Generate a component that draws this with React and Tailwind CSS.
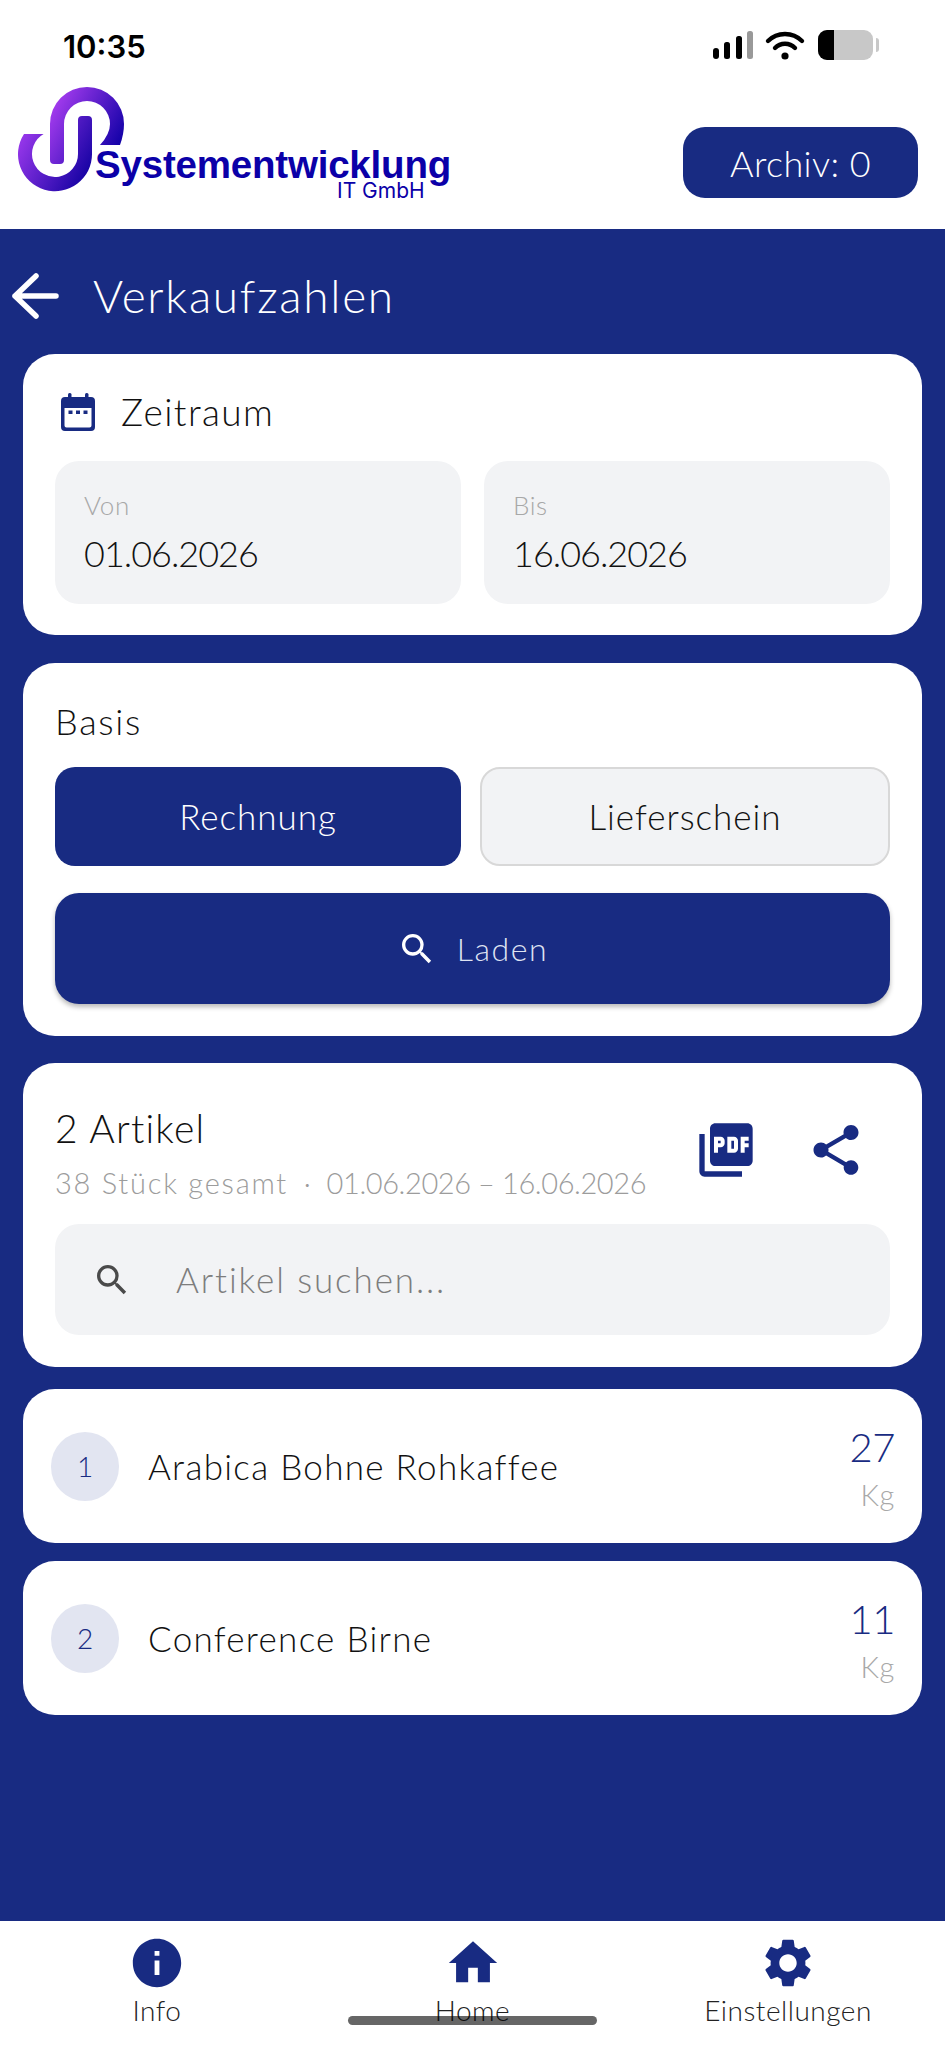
import React from "react";
import { MdSearch, MdPictureAsPdf, MdShare, MdInfo, MdHome, MdSettings } from "react-icons/md";

function Logo() {
  return (
    <div className="relative h-[118px] w-[470px] shrink-0">
      <svg className="absolute left-0 top-0" width="140" height="118" viewBox="0 80 140 118">
        <defs>
          <linearGradient id="gn" gradientUnits="userSpaceOnUse" x1="50" y1="100" x2="124" y2="140">
            <stop offset="0" stopColor="#ad3ff2" />
            <stop offset="1" stopColor="#1000a6" />
          </linearGradient>
          <linearGradient id="gu" gradientUnits="userSpaceOnUse" x1="20" y1="135" x2="92" y2="175">
            <stop offset="0" stopColor="#9a38ec" />
            <stop offset="1" stopColor="#1000a0" />
          </linearGradient>
        </defs>
        <path fill="url(#gn)" d="M50 160Q50 164 54 164H60Q64 164 64 160V124A23 23 0 1 1 110 124Q110 134 100 145H120Q124 134 124 124A37 37 0 0 0 50 124Z" />
        <path fill="url(#gu)" d="M24 134A37 37 0 1 0 92 154V120Q92 116 88 116H82Q78 116 78 120V154A23 23 0 1 1 43.6 134Z" />
      </svg>
      <span className="absolute left-[95px] top-[67px] font-['Liberation_Sans',sans-serif] text-[38.5px] leading-[36px] font-bold tracking-[-0.2px] whitespace-nowrap text-[#0b00a8]">
        Systementwicklung
      </span>
      <span className="absolute left-[337px] top-[103px] font-['Inter',sans-serif] text-[21px] leading-[16px] whitespace-nowrap text-[#0b00a8]">
        IT GmbH
      </span>
    </div>
  );
}

function StatusIcons() {
  return (
    <svg width="170" height="32" viewBox="713 31 170 32" className="shrink-0">
      <rect x="713" y="50" width="6" height="11" rx="3" fill="#000" />
      <rect x="724" y="44" width="6" height="17" rx="2.5" fill="#000" />
      <rect x="736" y="38" width="6" height="23" rx="2.5" fill="#000" />
      <rect x="747" y="33" width="6" height="28" rx="2.5" fill="#999" />
      <path d="M768 43A24 24 0 0 1 802 43" fill="none" stroke="#000" strokeWidth="4.4" strokeLinecap="round" />
      <path d="M775 50A14 14 0 0 1 795 50" fill="none" stroke="#000" strokeWidth="4.4" strokeLinecap="round" />
      <circle cx="785" cy="58" r="3.6" fill="#000" />
      <rect x="818" y="32" width="55" height="30" rx="9" fill="#c8c8c8" />
      <path d="M834 32H827A9 9 0 0 0 818 41V53A9 9 0 0 0 827 62H834Z" fill="#000" />
      <path d="M876 40Q879 40 879 43V51Q879 54 876 54Z" fill="#c8c8c8" />
    </svg>
  );
}

function CalendarIcon() {
  return (
    <svg width="34" height="38" viewBox="0 0 34 38" className="shrink-0">
      <rect x="7" y="0" width="3.5" height="6" rx="1.5" fill="#182b82" />
      <rect x="24" y="0" width="3.5" height="6" rx="1.5" fill="#182b82" />
      <path d="M4 4H30A4 4 0 0 1 34 8V34A4 4 0 0 1 30 38H4A4 4 0 0 1 0 34V8A4 4 0 0 1 4 4ZM3.5 15V32.5A2 2 0 0 0 5.5 34.5H28.5A2 2 0 0 0 30.5 32.5V15Z" fill="#182b82" fillRule="evenodd" />
      <rect x="7.5" y="17.5" width="4" height="3.5" fill="#182b82" />
      <rect x="15" y="17.5" width="4" height="3.5" fill="#182b82" />
      <rect x="22.5" y="17.5" width="4" height="3.5" fill="#182b82" />
    </svg>
  );
}

function Card({ className, children }) {
  return <div className={"rounded-[32px] bg-white " + className}>{children}</div>;
}

function DateBox({ label, value }) {
  return (
    <div className="flex h-[143px] flex-1 flex-col rounded-[24px] bg-[#f2f3f5] pl-[29px] pt-[26px]">
      <span className="text-[26px] leading-[36px] font-light tracking-[0.6px] text-[#a8a8a8]">{label}</span>
      <span className="mt-[7px] text-[36px] leading-[46px] font-light tracking-[-1px] text-[#111]">{value}</span>
    </div>
  );
}

function Row({ n, name, value, className }) {
  return (
    <Card className={"flex h-[154px] items-center pl-[28px] pr-[27px] " + className}>
      <div className="flex h-[69px] w-[68px] shrink-0 items-center justify-center rounded-full bg-[#e2e5f1] text-[28px] font-light text-[#182b82]">{n}</div>
      <span className="ml-[29px] flex-1 text-[35px] font-light tracking-[1.3px] text-[#111]">{name}</span>
      <div className="flex flex-col items-end pt-[2px]">
        <span className="text-[40px] leading-[50px] font-light tracking-[-0.5px] text-[#182b82]">{value}</span>
        <span className="mt-[5px] text-[29px] leading-[36px] font-light tracking-[0.6px] text-[#a8a8a8]">Kg</span>
      </div>
    </Card>
  );
}

function NavItem({ icon, label, className }) {
  return (
    <div className={"flex flex-col items-center " + className}>
      {icon}
      <span className="text-[28px] leading-[36px] font-light tracking-[0.5px] text-[#222]">{label}</span>
    </div>
  );
}

export default function App() {
  return (
    <div className="relative flex h-[2048px] w-[945px] flex-col overflow-hidden bg-white font-['Lato',sans-serif]">
      <header className="h-[229px] shrink-0 bg-white">
        <div className="flex h-[80px] items-start justify-between pl-[63px] pr-[62px] pt-[29px]">
          <span className="font-['Inter',sans-serif] text-[31px] leading-[36px] font-semibold text-black">10:35</span>
          <StatusIcons />
        </div>
        <div className="flex items-start justify-between pr-[27px]">
          <Logo />
          <button className="mt-[47px] h-[71px] w-[235px] rounded-[22px] bg-[#182b82] text-[36px] font-light tracking-[0.4px] text-white">Archiv: 0</button>
        </div>
      </header>

      <main className="flex flex-1 flex-col bg-[#182b82] px-[23px]">
        <div className="-ml-[23px] flex h-[125px] shrink-0 items-center pt-[8px]">
          <svg width="58" height="50" viewBox="0 0 58 50" className="ml-[8px] shrink-0">
            <path d="M48 25H7M28 5L7 25L28 45" fill="none" stroke="#fff" strokeWidth="5.5" strokeLinecap="round" strokeLinejoin="round" />
          </svg>
          <span className="ml-[27px] text-[46px] font-light tracking-[1.7px] text-white">Verkaufzahlen</span>
        </div>

        <Card className="h-[281px] shrink-0 px-[32px]">
          <div className="flex h-[107px] items-center pt-[9px]">
            <div className="ml-[6px]"><CalendarIcon /></div>
            <span className="ml-[26px] text-[37px] font-light tracking-[1.4px] text-[#111]">Zeitraum</span>
          </div>
          <div className="flex gap-[23px]">
            <DateBox label="Von" value="01.06.2026" />
            <DateBox label="Bis" value="16.06.2026" />
          </div>
        </Card>

        <Card className="mt-[28px] h-[373px] shrink-0 px-[32px]">
          <div className="flex h-[104px] items-center pt-[12px] text-[36px] font-light tracking-[1.7px] text-[#111]">Basis</div>
          <div className="flex gap-[19px]">
            <button className="h-[99px] flex-1 rounded-[20px] bg-[#182b82] text-[35px] tracking-[1px] font-light text-white">Rechnung</button>
            <button className="h-[99px] flex-1 rounded-[20px] border-2 border-[#d8d8d8] bg-[#f2f3f5] text-[35px] font-light tracking-[1px] text-[#111]">Lieferschein</button>
          </div>
          <button className="mt-[27px] flex h-[111px] w-full items-center justify-center rounded-[24px] bg-[#182b82] text-[32px] font-light tracking-[1.6px] text-[#dfe3f2] shadow-[0_3px_5px_rgba(0,0,0,0.28)]">
            <MdSearch className="mr-[20px] text-[40px] text-white" />
            Laden
          </button>
        </Card>

        <Card className="mt-[27px] h-[304px] shrink-0 px-[32px]">
          <div className="flex h-[161px] items-start justify-between">
            <div className="flex flex-col pt-[40px]">
              <span className="text-[39px] leading-[50px] font-light tracking-[1.2px] text-[#111]">2 Artikel</span>
              <span className="mt-[10px] text-[29px] leading-[40px] font-light whitespace-pre text-[#9c9c9c]">
                <span className="tracking-[1.75px]">38 Stück gesamt</span>
                <span>{"  ·  "}</span>
                <span className="tracking-[-0.4px]">01.06.2026 – 16.06.2026</span>
              </span>
            </div>
            <div className="flex items-center pr-[24px] pt-[55px]">
              <MdPictureAsPdf className="text-[64px] text-[#182b82]" />
              <MdShare className="ml-[48px] text-[60px] text-[#182b82]" />
            </div>
          </div>
          <div className="flex h-[111px] items-center rounded-[24px] bg-[#f2f3f5] pl-[37px]">
            <MdSearch className="shrink-0 text-[40px] text-[#4a4a4a]" />
            <span className="ml-[44px] text-[35px] font-light tracking-[1.9px] text-[#7d7d7d]">Artikel suchen...</span>
          </div>
        </Card>

        <Row className="mt-[22px] shrink-0" n="1" name="Arabica Bohne Rohkaffee" value="27" />
        <Row className="mt-[18px] shrink-0" n="2" name="Conference Birne" value="11" />
      </main>

      <nav className="flex h-[127px] shrink-0 items-start bg-white pt-[13px]">
        <NavItem className="w-[314px]" icon={<MdInfo className="text-[58px] text-[#182b82]" />} label="Info" />
        <NavItem className="w-[317px]" icon={<MdHome className="text-[58px] text-[#182b82]" />} label="Home" />
        <NavItem className="w-[314px]" icon={<MdSettings className="text-[58px] text-[#182b82]" />} label="Einstellungen" />
      </nav>
      <div className="absolute bottom-[23px] left-[348px] h-[9px] w-[249px] rounded-full bg-black/60" />
    </div>
  );
}
